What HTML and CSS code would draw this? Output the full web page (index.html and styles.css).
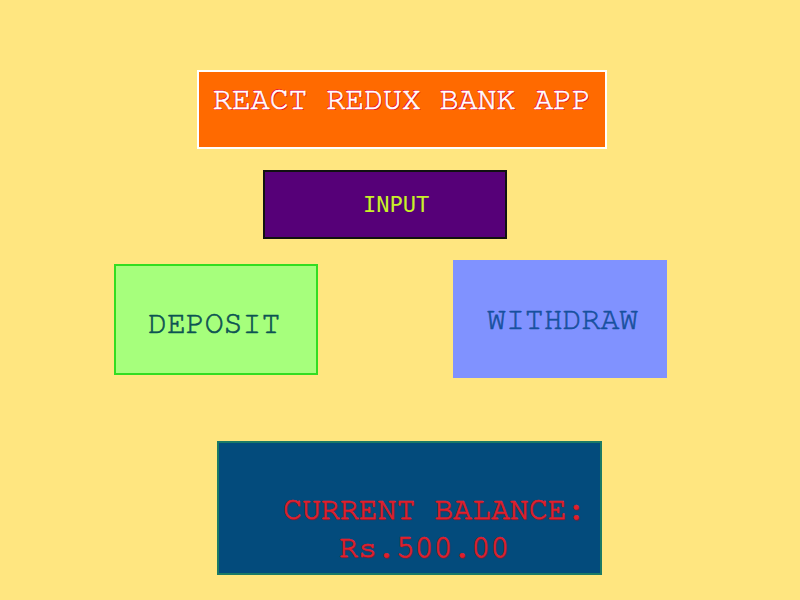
FILE: index.html
```html
<!DOCTYPE html>
<html>
<head>
<meta charset="utf-8">
<link rel="stylesheet" href="styles.css">
</head>
<body>
<div class="app">
  <h1 class="title">REACT REDUX BANK APP</h1>
  <div class="input-box">INPUT</div>
  <div class="actions">
    <div class="btn deposit">DEPOSIT</div>
    <div class="btn withdraw">WITHDRAW</div>
  </div>
  <div class="balance">
    <span class="line line-1">CURRENT BALANCE:</span>
    <span class="line line-2">Rs.500.00</span>
  </div>
</div>
</body>
</html>
```
FILE: styles.css
```css
html, body {
  margin: 0;
  padding: 0;
  background: #ffe680;
}
body {
  width: 800px;
  height: 600px;
  overflow: hidden;
  font-family: FreeMono, "Liberation Mono", monospace;
}
.app {
  display: flex;
  flex-direction: column;
  align-items: flex-start;
  padding-top: 70px;
}
.title {
  box-sizing: border-box;
  margin: 0 0 0 197px;
  width: 410px;
  height: 79px;
  border: 2px solid #ffffff;
  background: #ff6a00;
  padding: 10px 0 0 14px;
  font-family: FreeMono, monospace;
  font-weight: normal;
  font-size: 31.5px;
  line-height: 36px;
  color: #ffffff;
  -webkit-text-stroke: 0.6px #ffffff;
  text-shadow: 1px 1px 0 #e8102a, -1px -1px 0 #e8102a;
}
.input-box {
  box-sizing: border-box;
  margin: 21px 0 0 263px;
  width: 244px;
  height: 69px;
  border: 2px solid #111111;
  background: #560078;
  display: flex;
  align-items: center;
  padding-left: 98px;
  font-family: "DejaVu Sans Mono", monospace;
  font-size: 22px;
  color: #c8f028;
}
.actions {
  display: flex;
  align-items: center;
  margin-top: 21px;
}
.btn {
  box-sizing: border-box;
  display: flex;
  align-items: center;
  font-size: 31.5px;
  -webkit-text-stroke: 0.6px currentColor;
}
.deposit {
  margin-left: 114px;
  width: 204px;
  height: 111px;
  border: 2px solid #33dd22;
  background: #a6ff7c;
  padding: 8px 0 0 32px;
  color: #0c5252;
}
.withdraw {
  margin-left: 135px;
  width: 214px;
  height: 118px;
  background: #8092ff;
  padding: 0 0 0 34px;
  color: #17509e;
}
.balance {
  box-sizing: border-box;
  margin: 63px 0 0 217px;
  width: 385px;
  height: 134px;
  border: 2px solid #1b7a66;
  background: #034b7c;
  padding-top: 48px;
  font-size: 31.5px;
  line-height: 38px;
  color: #e0202c;
  -webkit-text-stroke: 0.6px #e0202c;
  text-shadow: 1px 1px 1px #a01020;
}
.line {
  display: block;
}
.line-1 {
  padding-left: 64px;
}
.line-2 {
  padding-left: 120px;
}
```
